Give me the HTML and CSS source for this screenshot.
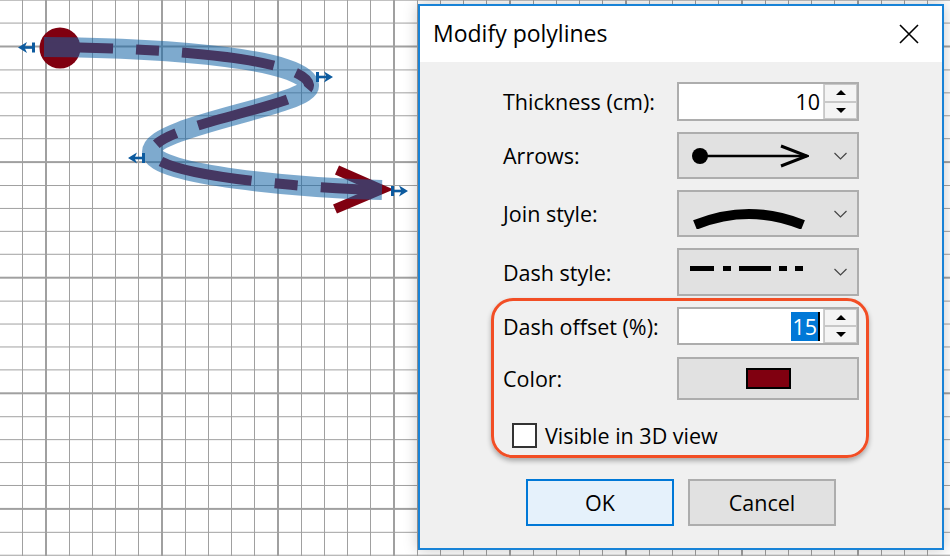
FILE: index.html
```html
<!DOCTYPE html>
<html lang="en">
<head>
    <meta charset="UTF-8">
    <title>Modify polylines</title>
    <link rel="stylesheet" href="styles.css">
</head>
<body>

<div class="plan">
    <svg class="drawing" width="950" height="556" viewBox="0 0 950 556">
        <defs>
            <pattern id="grid" patternUnits="userSpaceOnUse" x="45" y="45.5" width="116" height="115.6">
                <rect width="116" height="115.6" fill="#fff"/>
                <g fill="#a0a0a0" shape-rendering="crispEdges">
                    <rect x="0" y="0" width="2" height="115.6"/>
                    <rect x="23.7" y="0" width="1" height="115.6"/>
                    <rect x="46.9" y="0" width="1" height="115.6"/>
                    <rect x="70.1" y="0" width="1" height="115.6"/>
                    <rect x="93.3" y="0" width="1" height="115.6"/>
                    <rect x="0" y="0" width="116" height="2"/>
                    <rect x="0" y="23.6" width="116" height="1"/>
                    <rect x="0" y="46.7" width="116" height="1"/>
                    <rect x="0" y="69.9" width="116" height="1"/>
                    <rect x="0" y="93" width="116" height="1"/>
                </g>
            </pattern>
            <g id="mark">
                <rect x="0" y="-5" width="3" height="10"/>
                <rect x="3" y="-1.3" width="8" height="2.6"/>
                <polygon points="8,-5.5 17,0 8,5.5 10.5,0"/>
            </g>
        </defs>

        <rect width="950" height="556" fill="url(#grid)"/>

        <!-- the polyline itself -->
        <circle cx="60" cy="48" r="20.5" fill="#800010"/>
        <path d="M 44 47 C 180 48 305 60 309 85 C 312 105 152 125 152 152 C 152 175 300 188 381 190"
              fill="none" stroke="#800010" stroke-width="10" stroke-dasharray="93 23 23 23" stroke-dashoffset="24"/>
        <polyline points="337,170 381,189.5 335,209" fill="none" stroke="#800010" stroke-width="10" stroke-linejoin="miter"/>

        <!-- selection band -->
        <path d="M 44 47 C 180 48 305 60 309 85 C 312 105 152 125 152 152 C 152 175 300 188 382 190"
              fill="none" stroke="rgba(20,100,165,0.55)" stroke-width="20"/>

        <!-- point indicators -->
        <g fill="#0d5b9f">
            <use href="#mark" transform="translate(35,47.5) scale(-1,1)"/>
            <use href="#mark" transform="translate(316,77)"/>
            <use href="#mark" transform="translate(145,158) scale(-1,1)"/>
            <use href="#mark" transform="translate(391,191)"/>
        </g>
    </svg>

    <div class="dialog">
        <div class="titlebar">
            <span class="title">Modify polylines</span>
            <svg class="close" width="20" height="20" viewBox="0 0 20 20">
                <path d="M1 1 L19 19 M19 1 L1 19" stroke="#000" stroke-width="1.6"/>
            </svg>
        </div>

        <div class="content">
            <div class="form top">
                <span class="label">Thickness (cm):</span>
                <div class="spin">
                    <div class="value">10</div>
                    <div class="arrows"><span class="up"></span><span class="down"></span></div>
                </div>

                <span class="label">Arrows:</span>
                <div class="combo">
                    <svg width="130" height="30" viewBox="0 0 130 30">
                        <circle cx="21" cy="15" r="8" fill="#000"/>
                        <line x1="21" y1="15" x2="128" y2="15" stroke="#000" stroke-width="2.5"/>
                        <polyline points="102,5 128,15 102,25" fill="none" stroke="#000" stroke-width="3"/>
                    </svg>
                    <svg class="chev" width="13" height="8" viewBox="0 0 13 8"><polyline points="0.5,1 6.5,7 12.5,1" fill="none" stroke="#444" stroke-width="1.2"/></svg>
                </div>

                <span class="label">Join style:</span>
                <div class="combo">
                    <svg width="130" height="30" viewBox="0 0 130 30">
                        <path d="M 16 26 Q 70 4 124 26" fill="none" stroke="#000" stroke-width="10"/>
                    </svg>
                    <svg class="chev" width="13" height="8" viewBox="0 0 13 8"><polyline points="0.5,1 6.5,7 12.5,1" fill="none" stroke="#444" stroke-width="1.2"/></svg>
                </div>

                <span class="label">Dash style:</span>
                <div class="combo">
                    <svg width="130" height="30" viewBox="0 0 130 30">
                        <g fill="#000">
                            <rect x="11" y="9" width="24" height="5"/>
                            <rect x="44" y="9" width="8" height="5"/>
                            <rect x="60" y="9" width="32" height="5"/>
                            <rect x="100" y="9" width="8" height="5"/>
                            <rect x="116" y="9" width="8" height="5"/>
                        </g>
                    </svg>
                    <svg class="chev" width="13" height="8" viewBox="0 0 13 8"><polyline points="0.5,1 6.5,7 12.5,1" fill="none" stroke="#444" stroke-width="1.2"/></svg>
                </div>
            </div>

            <div class="highlight">
                <div class="form bottom">
                    <span class="label">Dash offset (%):</span>
                    <div class="spin">
                        <div class="value"><span class="sel">15</span><span class="caret"></span></div>
                        <div class="arrows"><span class="up"></span><span class="down"></span></div>
                    </div>

                    <span class="label">Color:</span>
                    <div class="colorbtn"><span class="swatch"></span></div>
                </div>

                <div class="check"><span class="box"></span>Visible in 3D view</div>
            </div>

            <div class="buttons">
                <div class="btn default">OK</div>
                <div class="btn">Cancel</div>
            </div>
        </div>
    </div>
</div>

</body>
</html>
```

FILE: styles.css
```css
* {
    box-sizing: border-box;
}

body {
    margin: 0;
    width: 950px;
    height: 556px;
    overflow: hidden;
    font-family: "Open Sans", "Noto Sans", sans-serif;
    background-color: #fff;
}

.plan {
    position: relative;
    width: 950px;
    height: 556px;
}

.drawing {
    display: block;
}

.dialog {
    position: absolute;
    left: 418px;
    top: 4px;
    width: 526px;
    height: 546px;
    border: 2px solid #1883d7;
    background-color: #f0f0f0;
    box-shadow: 0 0 14px rgba(0, 0, 0, 0.22);
}

.titlebar {
    height: 56px;
    background-color: #fff;
    display: flex;
    align-items: center;
    justify-content: space-between;
    padding: 0 23px 0 13px;
}

.title {
    font-size: 23px;
    color: #000;
    margin-top: -2px;
}

.content {
    padding: 20px 0 0 83px;
    font-size: 21.5px;
    color: #000;
}

.form {
    display: grid;
    grid-template-columns: 174px 182px;
    row-gap: 11px;
    align-items: center;
}

.form.top {
    grid-template-rows: 39px 47px 47px 48px;
}

.form.bottom {
    grid-template-rows: 38px 43px;
    row-gap: 12px;
}

.label {
    white-space: nowrap;
}

.spin {
    height: 100%;
    display: flex;
    background-color: #fff;
    border: 2px solid #adadad;
}

.spin .value {
    flex: 1;
    display: flex;
    align-items: center;
    justify-content: flex-end;
    padding-right: 3px;
}

.sel {
    background-color: #0078d7;
    color: #fff;
    line-height: 29px;
    padding: 0 1px;
}

.caret {
    width: 2px;
    height: 29px;
    background-color: #000;
}

.spin .arrows {
    width: 34px;
    display: flex;
    flex-direction: column;
    border-left: 1px solid #d0d0d0;
}

.up, .down {
    flex: 1;
    display: flex;
    justify-content: center;
    align-items: center;
    background-color: #f4f4f4;
    border: 1px solid #c8c8c8;
}

.up::after {
    content: "";
    border-left: 5px solid transparent;
    border-right: 5px solid transparent;
    border-bottom: 5px solid #000;
}

.down::after {
    content: "";
    border-left: 5px solid transparent;
    border-right: 5px solid transparent;
    border-top: 5px solid #000;
}

.combo {
    height: 100%;
    display: flex;
    align-items: center;
    justify-content: space-between;
    padding: 0 10px 0 0;
    background-color: #e1e1e1;
    border: 2px solid #adadad;
}

.combo svg {
    display: block;
}

.colorbtn {
    height: 100%;
    display: flex;
    align-items: center;
    justify-content: center;
    background-color: #e1e1e1;
    border: 2px solid #adadad;
}

.swatch {
    width: 45px;
    height: 21px;
    background-color: #800010;
    border: 2px solid #000;
    margin-left: 1px;
}

.highlight {
    width: 378px;
    margin: 2px 0 0 -12px;
    padding: 6px 7px 6px 9px;
    border: 3px solid #f24e25;
    border-radius: 22px;
    box-shadow: 0 3px 5px rgba(0, 0, 0, 0.3);
}

.check {
    display: flex;
    align-items: center;
    gap: 8px;
    margin: 21px 0 0 9px;
    height: 28px;
}

.check .box {
    width: 25px;
    height: 25px;
    background-color: #fff;
    border: 2px solid #333;
}

.buttons {
    display: flex;
    gap: 14px;
    margin: 21px 0 0 23px;
}

.btn {
    width: 148px;
    height: 47px;
    display: flex;
    align-items: center;
    justify-content: center;
    background-color: #e1e1e1;
    border: 2px solid #adadad;
}

.btn.default {
    background-color: #e5f1fb;
    border-color: #0078d7;
}
```
